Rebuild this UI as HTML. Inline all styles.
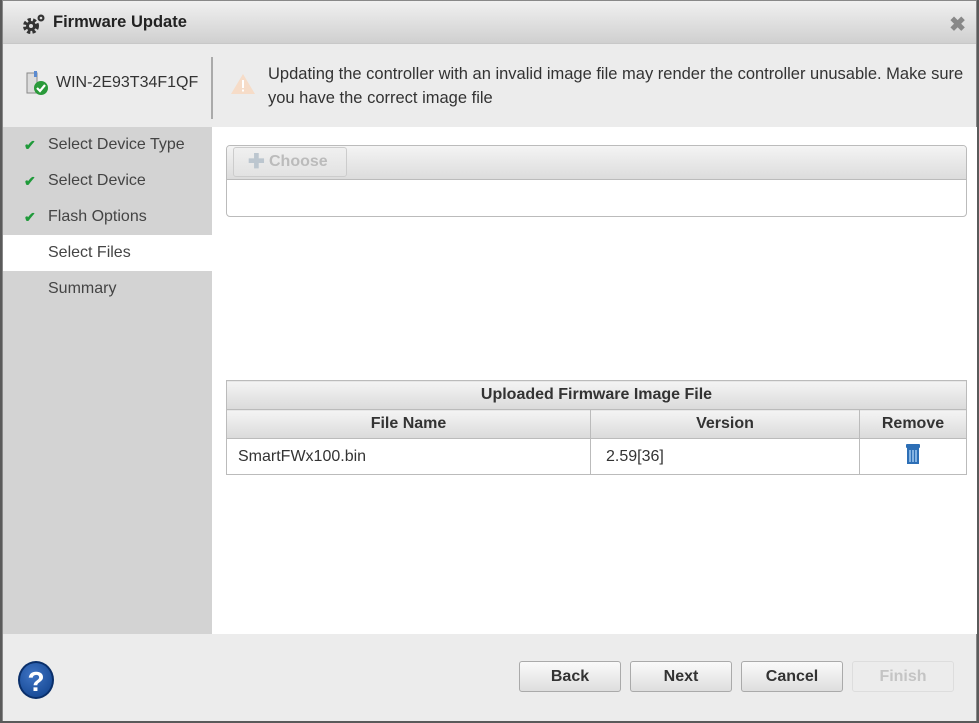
<!DOCTYPE html>
<html><head><style>
*{margin:0;padding:0;box-sizing:border-box}
body{width:979px;height:723px;background:#5a5a5a;font-family:"Liberation Sans",sans-serif;position:relative;overflow:hidden}
.dlg{position:absolute;left:2px;top:0;width:975px;height:721px;background:#ececec;border:1px solid #888}
.title{position:absolute;left:0;top:0;width:100%;height:43px;background:linear-gradient(#f0f0f0,#d0d0d0);border-bottom:1px solid #c8c8c8}
.title b{position:absolute;left:50px;top:12px;font-size:16.5px;color:#222}
.close{position:absolute;right:10px;top:11px;font-size:20px;color:#888;font-weight:bold}
.hdr{position:absolute;left:0;top:43px;width:100%;height:83px;background:#ececec}
.dev{position:absolute;left:53px;top:30px;font-size:16px;color:#333}
.vsep{position:absolute;left:208px;top:13px;width:2px;height:62px;background:#aaa}
.warn{position:absolute;left:265px;top:18px;font-size:16.5px;color:#333;line-height:24px;width:710px;white-space:nowrap}
.side{position:absolute;left:0;top:126px;width:209px;height:507px;background:#d3d3d3}
.side div{height:36px;line-height:36px;padding-left:45px;font-size:16px;color:#444;position:relative}
.side .act{background:#fff}
.side .ck{position:absolute;left:21px;top:0;color:#1f9a3a;font-weight:bold;font-size:14px}
.main{position:absolute;left:209px;top:126px;width:765px;height:507px;background:#fff}
.up{position:absolute;left:14px;top:18px;width:741px;height:72px;border:1px solid #bbb;border-radius:4px;overflow:hidden}
.up .bar{height:34px;background:linear-gradient(#f4f4f4,#dcdcdc);border-bottom:1px solid #bbb;position:relative}
.choose{position:absolute;left:6px;top:1px;width:114px;height:30px;border:1px solid #ccc;border-radius:3px;background:linear-gradient(#f0f0f0,#e2e2e2);color:#bbb;font-weight:bold;font-size:16px;line-height:28px;padding-left:35px}
.choose span{position:absolute;left:14px;top:0;color:#bcc6cf;font-size:20px}
table{position:absolute;left:14px;top:253px;width:741px;border-collapse:collapse;font-size:16px}
th,td{border:1px solid #bbb;height:29px;color:#333}
th{background:linear-gradient(#f4f4f4,#dadada);font-weight:bold}
td{height:36px}
.foot{position:absolute;left:0;top:633px;width:100%;height:87px;background:#ececec}
.btn{position:absolute;top:27px;width:102px;height:31px;border:1px solid #aaa;border-radius:3px;background:linear-gradient(#fafafa,#dedede);font-weight:bold;font-size:16px;color:#333;text-align:center;line-height:29px}
.help{position:absolute;left:15px;top:27px;width:36px;height:38px;border-radius:50%;background:radial-gradient(circle at 40% 35%,#3f74c4,#0d3f8a);color:#fff;font-weight:bold;font-size:28px;text-align:center;line-height:38px;border:2px solid #0a2f6a}
</style></head><body>
<div class="dlg">
<div class="title">
<svg style="position:absolute;left:18px;top:11px" width="26" height="24" viewBox="0 0 26 24"><circle cx="10" cy="14" r="6" fill="none" stroke="#333" stroke-width="4" stroke-dasharray="3 2"/><circle cx="10" cy="14" r="5" fill="#333"/><circle cx="10" cy="14" r="2" fill="#ddd"/><circle cx="20" cy="6" r="3.5" fill="#333"/><circle cx="20" cy="6" r="1.3" fill="#ddd"/></svg>
<b>Firmware Update</b><span class="close">✖</span></div>
<div class="hdr">
<svg style="position:absolute;left:22px;top:26px" width="26" height="26" viewBox="0 0 26 26"><rect x="2" y="3" width="10" height="20" fill="#dcdcdc" stroke="#888"/><rect x="9" y="1" width="3" height="6" fill="#5a8ad0"/><circle cx="16" cy="18" r="7" fill="#2a9a3a"/><path d="M12 18l3 3 5-6" stroke="#fff" stroke-width="2.2" fill="none"/></svg>
<div class="dev">WIN-2E93T34F1QF</div><div class="vsep"></div>
<svg style="position:absolute;left:227px;top:29px" width="26" height="22" viewBox="0 0 26 22"><path d="M13 1L25 21H1z" fill="#f6dcc8"/><rect x="12" y="7" width="2" height="8" fill="#fff"/><rect x="12" y="16.5" width="2" height="2" fill="#fff"/></svg>
<div class="warn">Updating the controller with an invalid image file may render the controller unusable. Make sure<br>you have the correct image file</div>
</div>
<div class="side">
<div><span class="ck">✔</span>Select Device Type</div>
<div><span class="ck">✔</span>Select Device</div>
<div><span class="ck">✔</span>Flash Options</div>
<div class="act">Select Files</div>
<div>Summary</div>
</div>
<div class="main">
<div class="up"><div class="bar"><div class="choose"><span>✚</span>Choose</div></div></div>
<table>
<tr><th colspan="3">Uploaded Firmware Image File</th></tr>
<tr><th style="width:364px">File Name</th><th style="width:269px">Version</th><th>Remove</th></tr>
<tr><td style="padding-left:11px">SmartFWx100.bin</td><td style="padding-left:15px">2.59[36]</td><td style="text-align:center"><svg width="18" height="22" viewBox="0 0 18 22"><rect x="2" y="1" width="14" height="4" rx="1" fill="#2d6fb6"/><rect x="3" y="5" width="12" height="16" fill="#2d6fb6"/><path d="M6 7v12M9 7v12M12 7v12" stroke="#bfe0ff" stroke-width="1.2"/></svg></td></tr>
</table>
</div>
<div class="foot">
<div class="help">?</div>
<div class="btn" style="left:516px">Back</div>
<div class="btn" style="left:627px">Next</div>
<div class="btn" style="left:738px">Cancel</div>
<div class="btn" style="left:849px;color:#c4c4c4;border-color:#ddd;background:#ececec">Finish</div>
</div>
</div>
</body></html>
